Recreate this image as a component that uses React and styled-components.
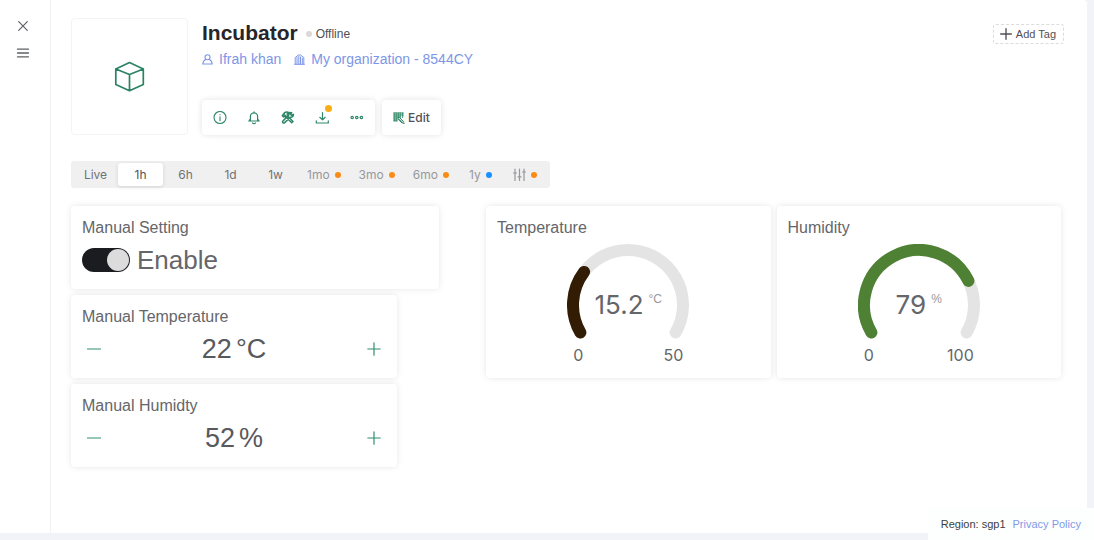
import React, { useState } from "react";
import styled, { createGlobalStyle } from "styled-components";

const GlobalStyle = createGlobalStyle`
  * { box-sizing: border-box; }
  body {
    margin: 0;
    background: #f2f3f8;
    color: #55565b;
    font-family: "Liberation Sans", Arial, sans-serif;
    font-size: 12px;
  }
  button { font-family: inherit; cursor: pointer; }
  svg { display: block; flex: none; }
`;

const Shell = styled.div`
  display: flex;
  min-height: 100vh;
  padding: 0 7px 7px 0;
`;

const Sidebar = styled.nav`
  flex: none;
  display: flex;
  flex-direction: column;
  align-items: center;
  gap: 7px;
  width: 51px;
  padding: 16px 5px 0 0;
  background: #fff;
  border-right: 1px solid #f2f2f4;
`;

const PlainButton = styled.button`
  display: flex;
  align-items: center;
  justify-content: center;
  width: 20px;
  height: 20px;
  padding: 0;
  border: 0;
  background: none;
  color: ${(p) => p.$color || "#5f6064"};
`;

const Main = styled.main`
  flex: 1;
  min-width: 0;
  padding: 18px 26px 24px 20px;
  background: #fff;
  border-radius: 0 4px 4px 0;
`;

const Header = styled.header`
  display: flex;
  gap: 14px;
`;

const Thumbnail = styled.div`
  display: grid;
  place-items: center;
  flex: none;
  width: 117px;
  height: 117px;
  border: 1px solid #f4f4f5;
  border-radius: 4px;
  color: #2a8463;
`;

const Info = styled.div`
  flex: 1;
  display: flex;
  flex-direction: column;
`;

const TitleRow = styled.div`
  display: flex;
  align-items: center;
  gap: 8px;
  height: 30px;
`;

const Title = styled.h1`
  margin: 0;
  color: #25252a;
  font-size: 21px;
  font-weight: 700;
  line-height: 24px;
`;

const Status = styled.span`
  display: flex;
  align-items: center;
  gap: 4px;
  padding-top: 2px;
  color: #505156;
  font-size: 12px;
  line-height: 16px;
`;

const Dot = styled.span`
  flex: none;
  width: 6px;
  height: 6px;
  border-radius: 50%;
  background: ${(p) => p.$color};
`;

const OwnerRow = styled.div`
  display: flex;
  align-items: center;
  gap: 13px;
  height: 22px;
`;

const OwnerLink = styled.a`
  display: flex;
  align-items: center;
  gap: 6px;
  color: #7d96e6;
  font-size: 14px;
  line-height: 20px;
  text-decoration: none;
`;

const Actions = styled.div`
  display: flex;
  gap: 7px;
  margin-top: auto;
`;

const Raised = styled.div`
  display: flex;
  align-items: center;
  height: 35px;
  padding: 0 2px 0 1px;
  border-radius: 4px;
  background: #fff;
  box-shadow: 0 0 6px rgba(0, 0, 0, 0.12);
`;

const ActionButton = styled(PlainButton)`
  position: relative;
  width: 34px;
  height: 34px;
  color: #2f8767;
`;

const Badge = styled.span`
  position: absolute;
  top: 4px;
  right: 7px;
  width: 7px;
  height: 7px;
  border-radius: 50%;
  background: #faad14;
`;

const EditButton = styled(Raised).attrs({ as: "button", type: "button" })`
  gap: 3px;
  padding: 0 11px;
  border: 0;
  color: #505156;
  font-family: Inter, sans-serif;
  font-size: 12px;
  font-weight: 500;
  svg { color: #2f8767; }
`;

const AddTag = styled.button`
  display: flex;
  align-items: center;
  gap: 4px;
  height: 20px;
  margin: 6px -3px 0 0;
  padding: 0 7px 0 6px;
  border: 1px dashed #dcdcde;
  border-radius: 3px;
  background: #fff;
  color: #505156;
  font-size: 11px;
`;

const RangeBar = styled.div`
  display: flex;
  width: fit-content;
  height: 27px;
  margin-top: 26px;
  padding: 2px;
  border-radius: 3px;
  background: #f0f0f0;
`;

const RangeButton = styled.button`
  display: flex;
  align-items: center;
  justify-content: center;
  gap: 5px;
  min-width: 45px;
  padding: 0 9px;
  border: 0;
  border-radius: 3px;
  background: ${(p) => (p.$active ? "#fff" : "transparent")};
  box-shadow: ${(p) => (p.$active ? "0 1px 4px rgba(0, 0, 0, 0.12)" : "none")};
  color: ${(p) => (p.$active ? "#505156" : p.$dot ? "#97989b" : "#707175")};
  font-family: Inter, sans-serif;
  font-size: 12px;
`;

const Widgets = styled.div`
  display: grid;
  grid-template-columns: repeat(24, minmax(0, 1fr));
  grid-auto-rows: 83px;
  gap: 6px;
  margin-top: 18px;
`;

const Card = styled.section`
  display: flex;
  flex-direction: column;
  grid-column: ${(p) => p.$start} / span ${(p) => p.$span};
  grid-row: ${(p) => p.$row} / span ${(p) => p.$rows || 1};
  padding: 11px;
  border-radius: 4px;
  background: #fff;
  box-shadow: 0 0 6px rgba(0, 0, 0, 0.1);
`;

const CardTitle = styled.h2`
  margin: 0;
  color: #65666a;
  font-size: 16px;
  font-weight: 400;
  line-height: 22px;
`;

const SwitchLabel = styled.label`
  display: flex;
  align-items: center;
  gap: 7px;
  margin-top: 4px;
  color: #65666a;
  font-size: 26px;
  line-height: 34px;
`;

const Switch = styled.input`
  appearance: none;
  display: flex;
  align-items: center;
  justify-content: flex-start;
  width: 48px;
  height: 24px;
  margin: 0;
  padding: 1px;
  border-radius: 12px;
  background: #a5a5a9;
  &:checked { justify-content: flex-end; background: #1b1c20; }
  &::before {
    content: "";
    width: 22px;
    height: 22px;
    border-radius: 50%;
    background: #dcdcdc;
  }
`;

const Stepper = styled.div`
  display: flex;
  align-items: center;
  justify-content: space-between;
  margin-top: 4px;
  padding: 0 2px;
`;

const StepValue = styled.output`
  display: flex;
  gap: 4px;
  color: #58595d;
  font-size: 27px;
  line-height: 34px;
`;

const GaugeBox = styled.div`
  display: grid;
  justify-items: center;
  margin-top: 5px;
`;

const GaugeDrawing = styled.svg`
  grid-area: 1 / 1;
`;

const Reading = styled.div`
  grid-area: 1 / 1;
  display: flex;
  align-items: flex-start;
  gap: 5px;
  margin-top: 46px;
  color: #65666a;
  font-family: Inter, sans-serif;
  font-size: 26px;
  line-height: 30px;
`;

const Unit = styled.span`
  color: #97989b;
  font-family: "Liberation Sans", Arial, sans-serif;
  font-size: 12px;
  line-height: 18px;
`;

const Limits = styled.div`
  display: flex;
  justify-content: space-between;
  width: 110px;
  color: #65666a;
  font-family: Inter, sans-serif;
  font-size: 16px;
  line-height: 22px;
`;

const Footer = styled.footer`
  position: fixed;
  right: 0;
  bottom: 0;
  display: flex;
  align-items: center;
  gap: 7px;
  height: 32px;
  padding: 0 13px;
  background: #fdfefe;
  color: #3c3d41;
  font-size: 11px;
`;

const PolicyLink = styled.a`
  color: #7f9ae8;
  text-decoration: none;
`;

function Icon({ size = 14, width = 1, children, box = 14 }) {
  return (
    <svg
      width={size}
      height={size}
      viewBox={`0 0 ${box} ${box}`}
      fill="none"
      stroke="currentColor"
      strokeWidth={width}
      strokeLinecap="round"
      strokeLinejoin="round"
      aria-hidden="true"
    >
      {children}
    </svg>
  );
}

const CloseIcon = () => (
  <Icon width={1.2}><path d="M2.7 2.7l8.600 8.600M11.300 2.700l-8.600 8.600" /></Icon>
);
const MenuIcon = () => (
  <Icon width={1.3}><path d="M1.5 3.2h11M1.5 7h11M1.5 10.8h11" /></Icon>
);
const CubeIcon = () => (
  <Icon size={32} box={32} width={1.7}>
    <path d="M15.500 1.500L29.300 8v15.500L15.500 29.700 1.800 23.500V8zM1.800 8l13.700 5.500L29.300 8M15.500 13.500v16" />
  </Icon>
);
const UserIcon = () => (
  <Icon size={11} box={11} width={1.1}>
    <circle cx="5.5" cy="3.3" r="2.5" />
    <path d="M3.7 5.4C2 6 1 7.8 .8 10h9.400c-.2-2.200-1.200-4-2.900-4.600" />
  </Icon>
);
const BuildingIcon = () => (
  <Icon size={11} box={11} width={1}>
    <path d="M1.200 10V3.500L4.500 1h2l3.300 2.500V10M.6 10.300h9.800M3 3.500v6.500M4.800 2v8M6.500 3v7M8.300 4v6" />
  </Icon>
);
const InfoIcon = () => (
  <Icon width={1.1}>
    <circle cx="7" cy="6.500" r="6" />
    <path d="M7 5.800v4M7 3.600v.2" />
  </Icon>
);
const BellIcon = () => (
  <Icon width={1.200}>
    <path d="M7 .8v1M1.800 10h10.400M3.400 10V5.500a3.600 3.600 0 0 1 7.200 0V10M5.600 12c.6.900 2.200.9 2.800 0M3.300 8L2 10M10.700 8L12 10" />
  </Icon>
);
const ToolsIcon = () => (
  <Icon width={1.500}>
    <path d="M1.300 4.800L3.600 1.700c1.500-1 3-.8 4.200-.2L6.200 2.900l1.200 1.200-2.700 2.400-1.200-1.300-1 .7zM6 7l1.400-1.300 4.600 4.700-1.300 1.300zM12.400 3.300l-1.800 1.100-1.200-1.200 1.300-1.500c-2-.4-3.400.8-3 2.600L2 9.900c-1.200 1.300.4 2.700 1.700 1.700l5.600-5.400c2 .3 3.400-1.100 3.100-2.900zM3 3.700l2 1.500" />
  </Icon>
);
const DownloadIcon = () => (
  <Icon width={1.200}>
    <path d="M7.500 1.500v7.300M4.800 6.300l2.700 2.600 2.700-2.600M1.300 9.800V12h12V9.800" />
  </Icon>
);
const MoreIcon = () => (
  <Icon width={1.200}>
    <circle cx="3.200" cy="6.500" r="1.200" />
    <circle cx="7.800" cy="6.500" r="1.200" />
    <circle cx="12.300" cy="6.500" r="1.200" />
  </Icon>
);
const EditIcon = () => (
  <Icon size={12} box={12} width={1}>
    <path d="M.8 1h9.400M.8 3h9.400M.8 5h7M.8 7h4M.8 8.800h3.500M1.200 1v8M3.200 1v8M5.200 1v4M7.200 1v4M9.700 1v4.500M5 5.500l.5 2.200 3.800 3.500 1.500-1.500L7 6zM6.500 7.500l3 2.600M11.300 11.300h-1" />
  </Icon>
);
const PlusIcon = ({ size = 14, width = 1.200 }) => (
  <Icon size={size} width={width}><path d="M7 .8v12.400M.8 7h12.400" /></Icon>
);
const MinusIcon = () => (
  <Icon width={1.200}><path d="M.5 7h13" /></Icon>
);
const SlidersIcon = () => (
  <Icon size={13} box={13} width={1.200}>
    <path d="M2 1v11.400M6.500 1v11.400M11 1v11.400M.5 5h3M5 8.800h3M9.500 4h3" />
  </Icon>
);

const ranges = [
  { label: "Live" },
  { label: "1h" },
  { label: "6h" },
  { label: "1d" },
  { label: "1w" },
  { label: "1mo", dot: "#fa8c16" },
  { label: "3mo", dot: "#fa8c16" },
  { label: "6mo", dot: "#fa8c16" },
  { label: "1y", dot: "#1890ff" },
  { label: "Custom range", icon: <SlidersIcon />, dot: "#fa8c16" },
];

function SwitchCard() {
  const [on, setOn] = useState(true);
  return (
    <Card $start={1} $span={9} $row={1}>
      <CardTitle>Manual Setting</CardTitle>
      <SwitchLabel>
        <Switch type="checkbox" role="switch" checked={on} onChange={() => setOn(!on)} />
        Enable
      </SwitchLabel>
    </Card>
  );
}

function StepperCard({ title, initial, unit, row }) {
  const [value, setValue] = useState(initial);
  return (
    <Card $start={1} $span={8} $row={row}>
      <CardTitle>{title}</CardTitle>
      <Stepper>
        <PlainButton type="button" $color="#2f8f6f" aria-label={`Decrease ${title}`} onClick={() => setValue(value - 1)}>
          <MinusIcon />
        </PlainButton>
        <StepValue>
          <span>{value}</span>
          <span>{unit}</span>
        </StepValue>
        <PlainButton type="button" $color="#2f8f6f" aria-label={`Increase ${title}`} onClick={() => setValue(value + 1)}>
          <PlusIcon />
        </PlainButton>
      </Stepper>
    </Card>
  );
}

const RADIUS = 55;

// Point on the dial, measured in degrees clockwise from the lower left end.
function dialPoint(degrees) {
  const angle = ((150 + degrees) * Math.PI) / 180;
  return `${61 + RADIUS * Math.cos(angle)} ${61 + RADIUS * Math.sin(angle)}`;
}

function dialArc(sweep) {
  return `M${dialPoint(0)}A${RADIUS} ${RADIUS} 0 ${sweep > 180 ? 1 : 0} 1 ${dialPoint(sweep)}`;
}

function GaugeCard({ title, value, unit, max, sweep, color, start }) {
  return (
    <Card $start={start} $span={7} $row={1} $rows={2}>
      <CardTitle>{title}</CardTitle>
      <GaugeBox>
        <GaugeDrawing width="122" height="100" viewBox="0 0 122 100" fill="none" strokeWidth="12" strokeLinecap="round" aria-hidden="true">
          <path d={dialArc(240)} stroke="#e4e4e4" />
          <path d={dialArc(sweep)} stroke={color} />
        </GaugeDrawing>
        <Reading>
          {value}
          <Unit>{unit}</Unit>
        </Reading>
        <Limits>
          <span>0</span>
          <span>{max}</span>
        </Limits>
      </GaugeBox>
    </Card>
  );
}

export default function App() {
  const [range, setRange] = useState("1h");
  return (
    <>
      <GlobalStyle />
      <Shell>
        <Sidebar>
          <PlainButton type="button" aria-label="Close"><CloseIcon /></PlainButton>
          <PlainButton type="button" aria-label="Menu"><MenuIcon /></PlainButton>
        </Sidebar>
        <Main>
          <Header>
            <Thumbnail><CubeIcon /></Thumbnail>
            <Info>
              <TitleRow>
                <Title>Incubator</Title>
                <Status><Dot $color="#d9d9d9" />Offline</Status>
              </TitleRow>
              <OwnerRow>
                <OwnerLink href="#owner"><UserIcon />Ifrah khan</OwnerLink>
                <OwnerLink href="#organization"><BuildingIcon />My organization - 8544CY</OwnerLink>
              </OwnerRow>
              <Actions>
                <Raised>
                  <ActionButton type="button" aria-label="Information"><InfoIcon /></ActionButton>
                  <ActionButton type="button" aria-label="Notifications"><BellIcon /></ActionButton>
                  <ActionButton type="button" aria-label="Tools"><ToolsIcon /></ActionButton>
                  <ActionButton type="button" aria-label="Download"><DownloadIcon /><Badge /></ActionButton>
                  <ActionButton type="button" aria-label="More"><MoreIcon /></ActionButton>
                </Raised>
                <EditButton><EditIcon />Edit</EditButton>
              </Actions>
            </Info>
            <AddTag type="button"><PlusIcon size={12} width={1.6} />Add Tag</AddTag>
          </Header>
          <RangeBar>
            {ranges.map((r) => (
              <RangeButton
                key={r.label}
                type="button"
                $active={range === r.label}
                $dot={Boolean(r.dot)}
                aria-pressed={range === r.label}
                aria-label={r.label}
                onClick={() => setRange(r.label)}
              >
                {r.icon || r.label}
                {r.dot && <Dot $color={r.dot} />}
              </RangeButton>
            ))}
          </RangeBar>
          <Widgets>
            <SwitchCard />
            <StepperCard title="Manual Temperature" initial={22} unit="°C" row={2} />
            <StepperCard title="Manual Humidty" initial={52} unit="%" row={3} />
            <GaugeCard title="Temperature" value="15.2" unit="°C" max="50" sweep={67} color="#331c04" start={11} />
            <GaugeCard title="Humidity" value="79" unit="%" max="100" sweep={184} color="#4e8134" start={18} />
          </Widgets>
        </Main>
      </Shell>
      <Footer>
        <span>Region: sgp1</span>
        <PolicyLink href="#privacy">Privacy Policy</PolicyLink>
      </Footer>
    </>
  );
}
